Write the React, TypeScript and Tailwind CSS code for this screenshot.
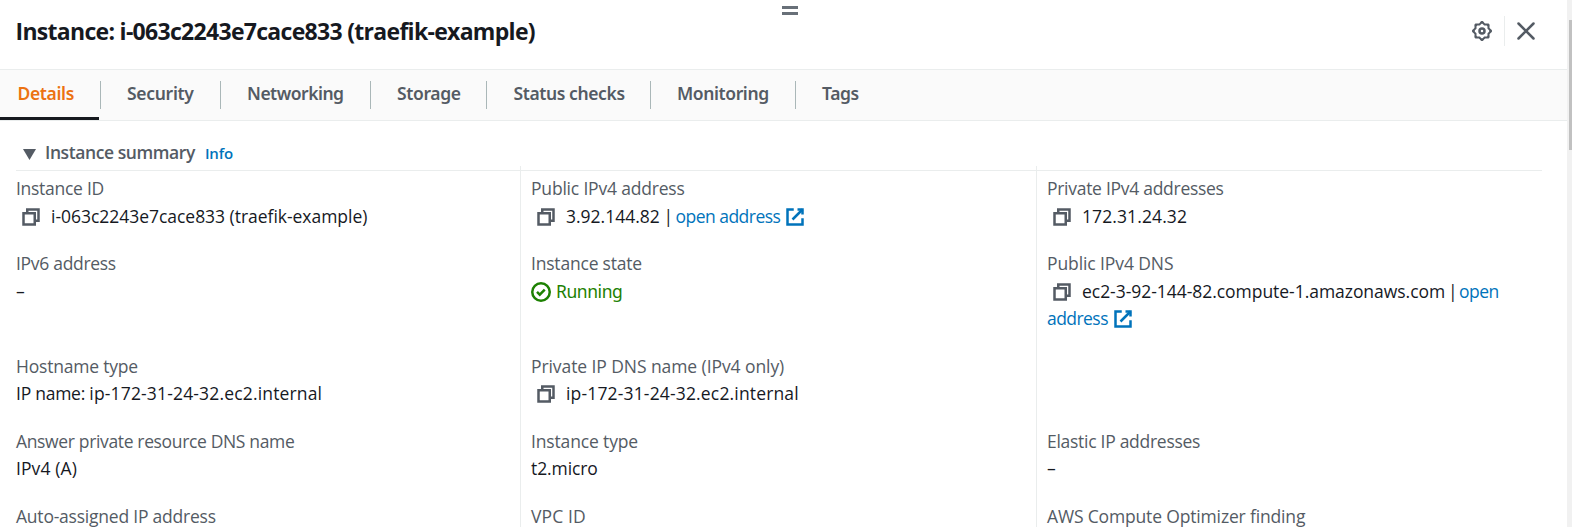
import React from "react";
import type { ReactNode } from "react";

const iconBase = "inline-block size-5 shrink-0 fill-none stroke-current stroke-2";

function CopyIcon() {
  return (
    <svg viewBox="0 0 16 16" className={`${iconBase} ml-[5px] mr-[10px] -mt-[2px] align-middle text-[#545b64]`}>
      <path d="M2 5h9v9H2z" />
      <path d="M5 5V2h9v9h-3" />
    </svg>
  );
}

function ExternalIcon() {
  return (
    <svg viewBox="0 0 16 16" className={`${iconBase} -mt-[2px] ml-[5px] align-middle`}>
      <path d="M10 2h4v4" />
      <path d="m6 10 8-8" />
      <path d="M14 9.05V14H2V2h5" />
    </svg>
  );
}

function CheckIcon() {
  return (
    <svg viewBox="0 0 16 16" className={`${iconBase} -mt-[2px] mr-[5px] align-middle`}>
      <circle cx="8" cy="8" r="7" />
      <path d="m4.8 7.9 2.2 2.2 4-4" />
    </svg>
  );
}

function scallop(radius: number, depth: number) {
  const steps = 96;
  const points: string[] = [];
  for (let i = 0; i < steps; i++) {
    const a = (i / steps) * Math.PI * 2;
    const r = radius + depth * Math.cos(8 * a);
    points.push(`${(8 + r * Math.cos(a)).toFixed(2)} ${(8 + r * Math.sin(a)).toFixed(2)}`);
  }
  return `M${points.join("L")}Z`;
}

const gearPath = scallop(7.3, 0.75) + scallop(5.3, 0.5);

function GearIcon() {
  return (
    <svg viewBox="0 0 16 16" className="size-5 shrink-0 fill-current">
      <path d={gearPath} fillRule="evenodd" />
      <circle cx="8" cy="8" r="2" className="fill-none stroke-current stroke-2" />
    </svg>
  );
}

function CloseIcon() {
  return (
    <svg viewBox="0 0 16 16" className={iconBase}>
      <path d="m2 2 12 12M14 2 2 14" strokeLinecap="round" />
    </svg>
  );
}

function Field({ label, labelClass = "", tall = false, children }: { label: string; labelClass?: string; tall?: boolean; children?: ReactNode }) {
  return (
    <div className={tall ? "h-[82.5px] shrink-0" : "h-[55px] shrink-0"}>
      <div className={`text-[#545b64] ${labelClass}`}>{label}</div>
      <div>{children}</div>
    </div>
  );
}

const tabs = [
  { name: "Details", width: "w-[101px]", pad: "pl-[17.5px]", tracking: "tracking-[-0.35px]" },
  { name: "Security", width: "w-[120px]", pad: "pl-[26px]", tracking: "tracking-[-0.3px]" },
  { name: "Networking", width: "w-[150px]", pad: "pl-[26px]", tracking: "tracking-[-0.5px]" },
  { name: "Storage", width: "w-[116px]", pad: "pl-[26px]", tracking: "tracking-[-0.35px]" },
  { name: "Status checks", width: "w-[164px]", pad: "pl-[26.5px]", tracking: "tracking-[-0.4px]" },
  { name: "Monitoring", width: "w-[145px]", pad: "pl-[26px]", tracking: "tracking-[-0.4px]" },
  { name: "Tags", width: "w-[100px]", pad: "pl-[26px]", tracking: "tracking-[-0.4px]" },
];

export default function App() {
  return (
    <div className="flex h-[527px] w-[1572px] overflow-hidden bg-white font-['Open_Sans',sans-serif] text-[17.5px] leading-[27.5px] text-[#16191f]">
      <main className="flex h-full w-[1567px] flex-col">
        <header className="relative flex h-[69px] shrink-0 items-start justify-between pl-[15.5px] pr-[31px]">
          <h1 className="pt-4 text-[23px] leading-[30px] font-bold tracking-[-0.7px]">Instance: i-063c2243e7cace833 (traefik-example)</h1>
          <div className="absolute left-[782px] top-[6px] flex h-[9px] w-4 flex-col justify-between">
            <span className="h-[3px] bg-[#687078]" />
            <span className="h-[3px] bg-[#687078]" />
          </div>
          <div className="mt-4 flex h-[30px] items-center text-[#545b64]">
            <GearIcon />
            <span className="ml-3 mr-[11px] h-[30px] w-px bg-[#eaeded]" />
            <CloseIcon />
          </div>
        </header>

        <nav className="flex h-[52px] shrink-0 border-y border-[#eaeded] bg-[#fafafa] font-['Noto_Sans',sans-serif] font-[650] text-[#545b64]">
          {tabs.map((t, i) => (
            <div key={t.name} className={`flex h-[50px] ${t.width}`}>
              <div className={`flex-1 pt-[10px] whitespace-nowrap ${t.pad} ${t.tracking} ${i === 0 ? "mr-px border-b-[3px] border-[#16191f] text-[#ec7211]" : ""}`}>{t.name}</div>
              {i < tabs.length - 1 && <span className="mt-[11px] h-7 w-px bg-[#aab7b8]" />}
            </div>
          ))}
        </nav>

        <section className="flex min-h-0 flex-1 flex-col pl-4 pr-[25px]">
          <div className="flex h-[50px] shrink-0 border-b border-[#eaeded] pl-[7px] pt-[18px]">
            <svg viewBox="0 0 13 11" className="mt-[10px] h-[11px] w-[13px] fill-[#545b64]">
              <path d="M0 0h13L6.5 11z" />
            </svg>
            <h2 className="ml-[9px] font-[650] tracking-[-0.42px] text-[#545b64]">Instance summary</h2>
            <a className="ml-[10px] pt-px text-[15px] font-[650] tracking-[-0.1px] text-[#0073bb]">Info</a>
          </div>

          <div className="-mt-[5px] flex h-[361px] shrink-0">
            <div className="flex w-[504px] flex-col gap-5 pt-[9px]">
              <Field label="Instance ID" labelClass="tracking-[-0.28px]">
                <CopyIcon /><span className="tracking-[-0.03px]">i-063c2243e7cace833 (traefik-example)</span>
              </Field>
              <Field label="IPv6 address" labelClass="tracking-[-0.3px]" tall>–</Field>
              <Field label="Hostname type" labelClass="tracking-[-0.2px]">
                <span className="tracking-[-0.25px]">IP name: </span><span className="tracking-[0.16px]">ip-172-31-24-32.ec2.internal</span>
              </Field>
              <Field label="Answer private resource DNS name" labelClass="tracking-[-0.35px]"><span className="tracking-[0.1px]">IPv4 (A)</span></Field>
              <Field label="Auto-assigned IP address" labelClass="tracking-[-0.22px]" />
            </div>
            <div className="flex w-[516px] flex-col gap-5 border-l border-[#eaeded] pl-[10px] pt-[9px]">
              <Field label="Public IPv4 address" labelClass="tracking-[-0.19px]">
                <CopyIcon />3.92.144.82<span className="tracking-[-1px]"> | </span><a className="tracking-[-0.53px] text-[#0073bb]">open address<ExternalIcon /></a>
              </Field>
              <Field label="Instance state" labelClass="tracking-[-0.2px]" tall>
                <span className="font-['Noto_Sans',sans-serif] tracking-[-0.44px] text-[#1d8102]"><CheckIcon />Running</span>
              </Field>
              <Field label="Private IP DNS name (IPv4 only)" labelClass="tracking-[-0.08px]">
                <CopyIcon /><span className="tracking-[0.16px]">ip-172-31-24-32.ec2.internal</span>
              </Field>
              <Field label="Instance type" labelClass="tracking-[-0.15px]"><span className="tracking-[-0.1px]">t2.micro</span></Field>
              <Field label="VPC ID" labelClass="tracking-[0.1px]" />
            </div>
            <div className="flex w-[506px] flex-col gap-5 border-l border-[#eaeded] pl-[10px] pt-[9px]">
              <Field label="Private IPv4 addresses" labelClass="tracking-[-0.28px]">
                <CopyIcon /><span className="tracking-[0.1px]">172.31.24.32</span>
              </Field>
              <Field label="Public IPv4 DNS" labelClass="tracking-[-0.1px]" tall>
                <CopyIcon /><span className="tracking-[-0.04px]">ec2-3-92-144-82.compute-1.amazonaws.com</span><span className="tracking-[-1.6px]"> | </span>
                <a className="tracking-[-0.55px] text-[#0073bb]">open<br />address<ExternalIcon /></a>
              </Field>
              <div className="h-[55px] shrink-0" />
              <Field label="Elastic IP addresses" labelClass="tracking-[-0.28px]">–</Field>
              <Field label="AWS Compute Optimizer finding" labelClass="tracking-[-0.16px]" />
            </div>
          </div>
        </section>
      </main>
      <div className="flex h-full w-[5px] bg-[#f1f1f1] pl-[2px] pt-5">
        <div className="h-[130px] w-[3px] bg-[#c1c1c1]" />
      </div>
    </div>
  );
}
